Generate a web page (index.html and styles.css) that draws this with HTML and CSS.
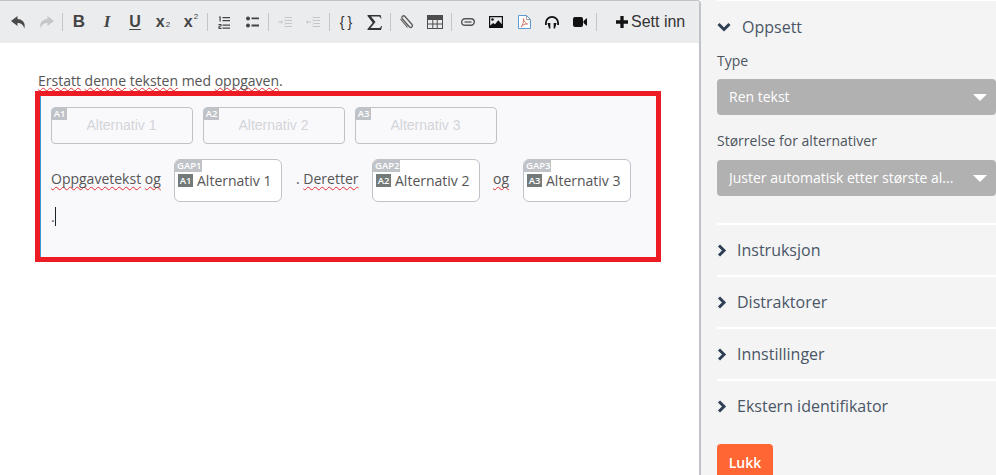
FILE: index.html
```html
<!DOCTYPE html>
<html lang="no">
<head>
<meta charset="utf-8">
<title>Editor</title>
<link rel="stylesheet" href="styles.css">
</head>
<body>
<div class="page">
  <main class="main">
    <div class="toolbar">
      <span class="btn"><svg viewBox="0 0 15 13" width="15" height="13"><path d="M6.500 0 0 5l6.500 5V7c3.500 0 5.500 1.300 6.800 5.500C15 7 11.500 3.200 6.500 3z" fill="#4a4a4a"/></svg></span>
      <span class="btn"><svg viewBox="0 0 15 13" width="15" height="13"><path d="M8.500 0 15 5l-6.500 5V7C5 7 3 8.300 1.700 12.500 0 7 3.500 3.200 8.500 3z" fill="#c4c6c9"/></svg></span>
      <span class="sep"></span>
      <b class="btn tb tb-b">B</b>
      <i class="btn tb tb-i">I</i>
      <span class="btn tb tb-u">U</span>
      <span class="btn tb tb-x">x<span class="sb">2</span></span>
      <span class="btn tb tb-x">x<span class="su">2</span></span>
      <span class="sep"></span>
      <span class="btn"><svg viewBox="0 0 12 13" width="12" height="13"><path d="M4.500 1h7.500v1.200H4.500zM4.500 4h7.500v1.200H4.500zM4.500 8.500h7.500v1.200H4.500zM4.500 11.500h7.500v1.200H4.500z" fill="#444"/><path d="M1 .5h1.700v5H1.500V1.600H1zM.5 8h3v2.600H1.700v1.200h1.800V13h-3v-3.300h1.800V9.100H.5z" fill="#444"/></svg></span>
      <span class="btn"><svg viewBox="0 0 13 12" width="13" height="12"><circle cx="2" cy="2.500" r="2" fill="#444"/><circle cx="2" cy="9.500" r="2" fill="#444"/><path d="M5.500 1.500H13V3.300H5.500zM5.500 8.600H13v1.800H5.500z" fill="#444"/></svg></span>
      <span class="sep"></span>
      <span class="btn"><svg viewBox="0 0 14 13" width="14" height="13"><path d="M7 1h7v1H7zM7 4h7v1H7zM7 7h7v1H7zM7 10h7v1H7zM6 .5h.7v.8H6zM6 3h.7v.8H6zM6 5.500h.7v.8H6zM6 8h.7v.8H6zM6 10.500h.7v.8H6zM0 5.500h3v1H0zM3 4l2 2-2 2z" fill="#c4c6c9"/></svg></span>
      <span class="btn"><svg viewBox="0 0 14 13" width="14" height="13"><path d="M7 1h7v1H7zM7 4h7v1H7zM7 7h7v1H7zM7 10h7v1H7zM6 .5h.7v.8H6zM6 3h.7v.8H6zM6 5.500h.7v.8H6zM6 8h.7v.8H6zM6 10.500h.7v.8H6zM2 5.500h3v1H2zM2 4 0 6l2 2z" fill="#c4c6c9"/></svg></span>
      <span class="sep"></span>
      <span class="btn tb tb-brace">{}</span>
      <span class="btn"><svg viewBox="0 0 15 15" width="15" height="15"><path d="M.5 0h13l1 3.500h-.8C13.200 2 12.700 1.600 11 1.600H4L8.500 7l-5 6h8c1.700 0 2.200-.5 2.600-2h.9l-1 4H.5v-1l5.200-6.300L.5 1z" fill="#333"/></svg></span>
      <span class="sep"></span>
      <span class="btn"><svg viewBox="0 0 16 16" width="16" height="16"><path d="M3.500 5.500l6.800 7.700c1.700 1.900 4.200-.3 2.700-2.200L6 3C4.500 1.300 1.800 3.300 3.200 5.200l6.300 7.300" transform="translate(0 -.5)" fill="none" stroke="#5a5a5a" stroke-width="1.300"/><path d="M1.500 5l7 8.500" fill="none" stroke="#5a5a5a" stroke-width="1.100"/></svg></span>
      <span class="btn"><svg viewBox="0 0 16 14" width="16" height="14"><path d="M0 0h16v14H0zM1 5v3.500h4.300V5zm5.300 0v3.500h3.400V5zm4.400 0v3.500H15V5zM1 9.500V13h4.300V9.500zm5.300 0V13h3.400V9.500zm4.400 0V13H15V9.500z" fill="#4d4d4d" fill-rule="evenodd"/></svg></span>
      <span class="sep"></span>
      <span class="btn"><svg viewBox="0 0 14 8" width="14" height="8"><rect x=".7" y=".7" width="12.600" height="6.600" rx="3.300" fill="none" stroke="#555" stroke-width="1.400"/><path d="M3.500 4h7" stroke="#555" stroke-width="1.300"/></svg></span>
      <span class="btn"><svg viewBox="0 0 14 12" width="14" height="12"><path d="M0 0h14v12H0zM1.200 1.200v8.300l3-2.500 1.800 1.300 3.300-4 3.500 4V1.200z" fill="#111" fill-rule="evenodd"/><circle cx="3.500" cy="3.500" r="1.300" fill="#111"/></svg></span>
      <span class="btn"><svg viewBox="0 0 13 14" width="13" height="14"><path d="M.5.500h8l4 4v9H.500z" fill="#fff" stroke="#5a9bd4"/><path d="M8.500.5v4h4" fill="none" stroke="#888" stroke-width=".8"/><path d="M3 12c1.800-2 2.800-5 2.400-8.500.5 3 1.800 4.800 4.100 5.500-2.500-.2-4.500.6-6.500 3z" fill="none" stroke="#c9705f" stroke-width=".9"/></svg></span>
      <span class="btn"><svg viewBox="0 0 14 13" width="14" height="13"><path d="M0 9V7a7 7 0 0 1 14 0v2h-1.800V7a5.200 5.200 0 0 0-10.400 0v2z" fill="#111"/><path d="M2.500 7H5.300v5.500H4zM8.700 7h2.800L10 12.500H8.700z" fill="#111"/></svg></span>
      <span class="btn"><svg viewBox="0 0 14 10" width="14" height="10"><rect width="10" height="10" rx="2" fill="#111"/><path d="M10.500 4 14 1v8l-3.500-3z" fill="#111"/></svg></span>
      <span class="sep"></span>
      <span class="insert"><svg class="plus" viewBox="0 0 11 11" width="12" height="12"><path d="M4 0h3v4h4v3H7v4H4V7H0V4h4z" fill="#111"/></svg>Sett inn</span>
    </div>

    <div class="content">
      <p class="intro"><span class="sp sp-tight">Erstatt</span> <span class="sp sp-tight">denne</span> <span class="sp sp-tight">teksten</span> med <span class="sp sp-tight">oppgaven</span>.</p>
      <div class="frame">
        <div class="editor">
          <div class="choices">
            <div class="choice"><span class="badge">A1</span>Alternativ 1</div>
            <div class="choice"><span class="badge">A2</span>Alternativ 2</div>
            <div class="choice"><span class="badge">A3</span>Alternativ 3</div>
          </div>
          <div class="line">
            <span class="txt t1"><span class="sp">Oppgavetekst</span> <span class="sp">og</span></span>
            <div class="gap"><span class="gaplabel">GAP1</span><span class="ans"><span class="a">A1</span>Alternativ 1</span></div>
            <span class="txt t2">. <span class="sp">Deretter</span></span>
            <div class="gap"><span class="gaplabel">GAP2</span><span class="ans"><span class="a">A2</span>Alternativ 2</span></div>
            <span class="txt t3"><span class="sp">og</span></span>
            <div class="gap"><span class="gaplabel">GAP3</span><span class="ans"><span class="a">A3</span>Alternativ 3</span></div>
          </div>
          <div class="last">.<span class="caret"></span></div>
        </div>
      </div>
    </div>
  </main>

  <aside class="side">
    <section class="sec open">
      <h3 class="head"><svg class="chev-d" viewBox="0 0 14 10" width="14" height="10"><path d="M1.500 2 7 7.500 12.500 2" fill="none" stroke="#2f3f55" stroke-width="3"/></svg>Oppsett</h3>
      <div class="label">Type</div>
      <div class="select">Ren tekst<span class="tri"></span></div>
      <div class="label l2">Størrelse for alternativer</div>
      <div class="select s2"><span class="val">Juster automatisk etter største al...</span><span class="tri"></span></div>
    </section>
    <section class="sec"><h3 class="head"><svg class="chev-r" viewBox="0 0 10 13" width="10" height="13"><path d="M2 1.500 7 6.500 2 11.500" fill="none" stroke="#2f3f55" stroke-width="3"/></svg>Instruksjon</h3></section>
    <section class="sec"><h3 class="head"><svg class="chev-r" viewBox="0 0 10 13" width="10" height="13"><path d="M2 1.500 7 6.500 2 11.500" fill="none" stroke="#2f3f55" stroke-width="3"/></svg>Distraktorer</h3></section>
    <section class="sec"><h3 class="head"><svg class="chev-r" viewBox="0 0 10 13" width="10" height="13"><path d="M2 1.500 7 6.500 2 11.500" fill="none" stroke="#2f3f55" stroke-width="3"/></svg>Innstillinger</h3></section>
    <section class="sec"><h3 class="head"><svg class="chev-r" viewBox="0 0 10 13" width="10" height="13"><path d="M2 1.500 7 6.500 2 11.500" fill="none" stroke="#2f3f55" stroke-width="3"/></svg>Ekstern identifikator</h3></section>
    <button class="close">Lukk</button>
  </aside>
</div>
</body>
</html>
```
FILE: styles.css
```css
* { box-sizing: border-box; }
html, body { margin: 0; height: 100%; overflow: hidden; background: #fff; }
body { font-family: "Open Sans", sans-serif; font-size: 14px; color: #555; }
.page { display: flex; width: 996px; height: 475px; overflow: hidden; }
.main { width: 701px; flex: none; border-top: 1px solid #c0c4c8; border-right: 2px solid #c0c4c8; border-top-right-radius: 4px; }
.toolbar { display: flex; align-items: center; height: 42px; background: #ebecee; padding-left: 4px; white-space: nowrap; border-top-right-radius: 4px; }
.btn { flex: none; width: 28px; display: flex; justify-content: center; align-items: center; }
.sep { width: 1px; height: 18px; margin: 0 2px; background: #c4c6c9; flex: none; }
.tb { font-family: "Liberation Sans", sans-serif; color: #444; font-size: 15px; line-height: 16px; }
.tb-b { font-weight: bold; font-size: 17px; }
.tb-i { font-weight: bold; font-family: "Liberation Serif", serif; font-size: 17px; }
.tb-u { font-weight: bold; font-size: 16px; text-decoration: underline; text-underline-offset: 2px; }
.tb-x { font-weight: bold; font-size: 16px; }
.sb, .su { position: relative; font-size: 8px; font-weight: 400; margin-left: 1px; }
.sb { top: 3px; }
.su { top: -5px; }
.tb-brace { font-weight: 400; font-size: 14px; letter-spacing: 3px; color: #333; padding-left: 3px; }
.insert { display: flex; align-items: center; margin-left: 17px; font-family: "Liberation Sans", sans-serif; font-size: 16px; color: #333; }
.plus { margin-right: 3px; }
.content { padding: 28px 0 0 35px; }
.intro { margin: 0 0 1px 3px; height: 19px; line-height: 19px; }
.sp { text-decoration: underline wavy #e03030 1px; text-underline-offset: 2px; text-decoration-skip-ink: none; }
.sp-tight { text-underline-offset: 1px; }
.frame { position: relative; width: 626px; height: 171px; border: 5px solid #ed1c24; }
.editor { height: 161px; background: #f9f9fc; border-left: 1px solid #3a9ad9; padding: 11px 0 0 10px; }
.choices { display: flex; gap: 10px; }
.choice { position: relative; width: 142px; height: 37px; border: 1px solid #bfc3c8; border-radius: 4px; text-align: center; font-family: "Liberation Sans", sans-serif; font-size: 14px; line-height: 35px; color: #d3d5d8; padding-right: 1px; }
.badge { position: absolute; left: 0; top: 0; width: 15px; height: 12px; background: #bfc3c8; color: #fff; font-size: 9.500px; font-weight: 600; line-height: 12px; text-align: center; border-top-left-radius: 3px; font-family: "Open Sans", sans-serif; }
.line { display: flex; align-items: center; margin-top: 15px; height: 43px; }
.txt { flex: none; position: relative; top: -2px; white-space: nowrap; }
.t1 { width: 123px; }
.t2 { width: 90px; padding-left: 14px; }
.t3 { width: 43px; padding-left: 13px; }
.gap { position: relative; flex: none; width: 108px; height: 43px; border: 1px solid #bfc3c8; border-radius: 6px; background: #fff; }
.gaplabel { position: absolute; left: 0; top: 0; height: 12px; width: 27px; background: #bfc3c8; color: #fff; font-size: 9.500px; font-weight: 600; line-height: 12px; padding-left: 2px; border-top-left-radius: 5px; }
.ans { position: absolute; left: 3px; top: 11px; display: flex; align-items: center; height: 19px; white-space: nowrap; }
.a { width: 15px; height: 13px; background: #727a7a; color: #fff; font-size: 9.500px; font-weight: 600; line-height: 13px; text-align: center; margin-right: 4px; }
.last { display: flex; margin-top: 5px; height: 19px; line-height: 19px; align-items: center; }
.caret { width: 1px; height: 19px; background: #222; }
.side { flex: 1; height: 475px; background: #f4f4f4; padding-left: 16px; overflow: hidden; color: #3e4b5b; }
.sec { border-top: 2px solid #fff; height: 52px; padding-top: 14px; }
.sec.open { height: 223px; border-top: 1px solid #fff; padding-top: 15px; }
.head { margin: 0; font-weight: 400; font-size: 16px; display: flex; align-items: center; height: 22px; color: #4a5667; }
.chev-d { flex: none; margin-right: 11px; }
.chev-r { flex: none; margin-right: 10px; }
.label { font-size: 14px; line-height: 19px; margin-top: 13px; color: #4d5560; }
.label.l2 { margin-top: 16px; }
.select { position: relative; width: 279px; height: 36px; margin-top: 9px; background: #b1b1b1; border-radius: 4px; color: #fff; padding-left: 12px; font-size: 14px; line-height: 36px; }
.select.s2 { margin-top: 10px; }
.val { display: block; white-space: nowrap; overflow: hidden; width: 242px; }
.tri { position: absolute; right: 9px; top: 15px; border: 7px solid transparent; border-top-color: #fff; border-bottom: 0; }
.close { display: block; margin-top: 13px; width: 56px; height: 36px; border: 0; border-radius: 4px; background: #ff6633; color: #fff; font: 600 14px "Open Sans", sans-serif; padding: 0; }
```
